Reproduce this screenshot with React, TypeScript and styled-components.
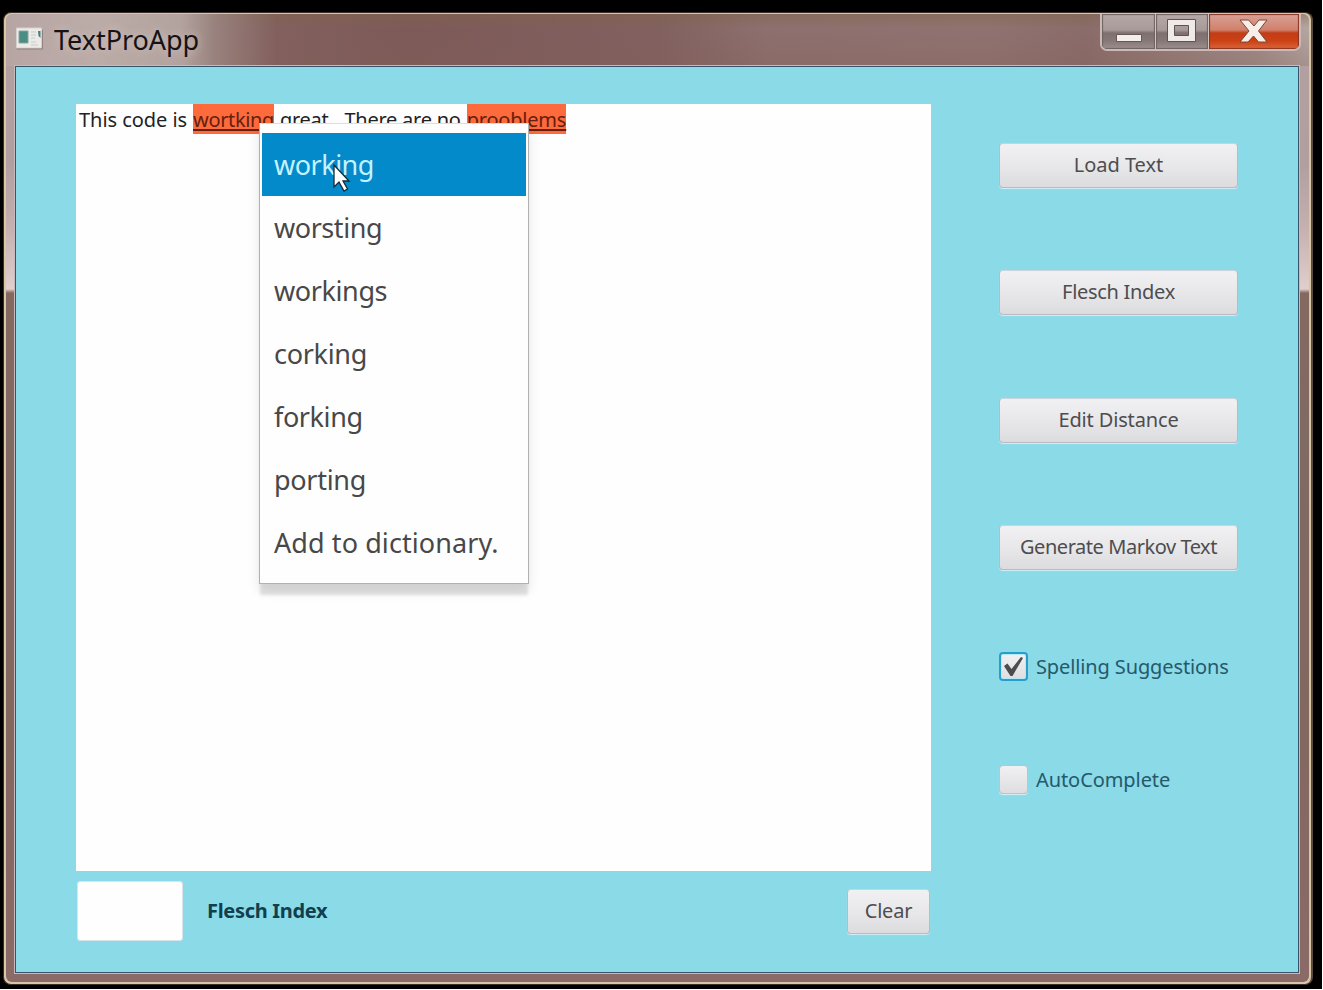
import React from "react";
import styled, { createGlobalStyle } from "styled-components";

const GlobalStyle = createGlobalStyle`
  * { box-sizing: border-box; }
  html { background: #fff; }
  body { margin: 0; overflow: hidden; font-family: "Noto Sans", "Open Sans", sans-serif; }
`;

const Desktop = styled.div`
  width: 1322px;
  height: 989px;
  padding: 12px 9px 4px 3px;
  background: #000;
`;

const Frame = styled.div`
  height: 973px;
  border: 1px solid #3b3029;
  border-right: 2px solid #5a4c42;
  border-radius: 8px;
  background: #d8c6a6;
  padding: 1px 2px 2px 2px;
`;

const Glass = styled.div`
  height: 100%;
  border-radius: 6px;
  display: flex;
  flex-direction: column;
  padding: 0 9px 8px 8px;
  background:
    linear-gradient(90deg, #b7a5a3 0, #bcaca8 90px, #b3a39f 175px, rgba(158,137,132,.8) 210px, rgba(130,98,96,0) 270px) 0 0 / 100% 52px no-repeat,
    linear-gradient(180deg, rgba(128,100,70,.45), rgba(130,96,98,0) 14px, rgba(130,94,84,.3) 52px) 0 0 / 100% 52px no-repeat,
    linear-gradient(90deg, #82605f 270px, #7d5a59 400px, #816060 650px, #8d706f 760px, #907371 980px, #8a6c6b 1080px, #a28e8b 1250px, #b6a7a4 1304px) 0 0 / 100% 52px no-repeat,
    linear-gradient(180deg, #b3a0a0 0, #b19f9f 150px, #c4aeae 210px, #e0cfcc 275px, #84695f 279px, #806a64 420px, #82685f 700px, #8b6a68 100%);
`;

const TitleBar = styled.header`
  height: 51px;
  flex: none;
  display: flex;
  align-items: flex-start;
  padding-left: 2px;
`;

const AppIcon = styled.svg`
  margin-top: 13px;
  flex: none;
`;

const Title = styled.h1`
  margin: 6px 0 0 11px;
  font-size: 27px;
  line-height: 40px;
  font-weight: 400;
  letter-spacing: -0.05px;
  color: #171314;
  flex: 1;
  text-shadow: 0 0 10px rgba(225, 212, 208, .7);
`;

const Controls = styled.div`
  display: flex;
  width: 201px;
  height: 37px;
  margin-right: -1px;
  border: 2px solid #cbb9b3;
  border-top: 0;
  border-radius: 0 0 7px 7px;
  overflow: hidden;
`;

const Control = styled.div<{ $width: number; $close?: boolean }>`
  width: ${p => p.$width}px;
  flex: none;
  display: flex;
  justify-content: center;
  border-right: ${p => (p.$close ? "0" : "1px solid #d3c4c1")};
  box-shadow: inset 0 0 1px 1px ${p => (p.$close ? "#8b3424" : "#6f6161")};
  background: ${p =>
    p.$close
      ? "linear-gradient(#d9a296 0, #d0806c 16px, #c23c16 19px, #cc4215 27px, #dd6a40 36px)"
      : "linear-gradient(#b5a8a6 0, #a79b99 16px, #7d706f 19px, #857876 27px, #a09290 36px)"};
`;

const Client = styled.main`
  flex: 1;
  min-height: 0;
  border: 1px solid #cab8bd;
  display: flex;
`;

const Surface = styled.div`
  flex: 1;
  border: 1px solid #36546a;
  background: #8adae8;
  padding: 37px 59px 28px 60px;
  display: flex;
  justify-content: space-between;
`;

const Left = styled.section`
  width: 855px;
`;

const Editor = styled.div`
  position: relative;
  height: 767px;
  background: #fefefe;
  padding-left: 3px;
  font-size: 20px;
  line-height: 31px;
  color: #222;
  white-space: pre;
`;

const Word = styled.span<{ $gap?: number; $spacing?: number }>`
  display: inline-block;
  height: 30px;
  margin-left: ${p => p.$gap ?? 0}px;
  letter-spacing: ${p => p.$spacing ?? 0}px;
`;

const Misspelled = styled(Word)`
  background: #fd6a3c;
  color: #64200f;
  text-decoration: underline;
  text-decoration-thickness: 2px;
  text-underline-offset: 2px;
`;

const Menu = styled.ul`
  position: absolute;
  left: 183px;
  top: 19px;
  width: 270px;
  height: 461px;
  margin: 0;
  padding: 9px 2px;
  list-style: none;
  background: #fefefe;
  border: 1px solid #b1b1b1;
  border-top-color: #ddd;
  box-shadow: 0 12px 3px -1px rgba(0, 0, 0, .11), 0 7px 12px rgba(0, 0, 0, .09);
`;

const MenuItem = styled.li<{ $active?: boolean; $spacing?: number }>`
  height: 63px;
  padding-left: 12px;
  font-size: 27px;
  line-height: 63px;
  letter-spacing: ${p => p.$spacing ?? -0.35}px;
  color: ${p => (p.$active ? "#c6f2ff" : "#484848")};
  background: ${p => (p.$active ? "#028acb" : "transparent")};
`;

const Pointer = styled.svg`
  position: absolute;
  left: 73px;
  top: 39px;
`;

const Footer = styled.footer`
  display: flex;
  align-items: flex-start;
  padding: 10px 1px 0;
`;

const ScoreField = styled.div`
  width: 106px;
  height: 60px;
  background: #fefefe;
  border: 1px solid #d9e4ea;
  border-radius: 3px;
`;

const ScoreLabel = styled.span`
  margin-left: 24px;
  flex: 1;
  line-height: 59px;
  font-size: 20px;
  font-weight: 700;
  letter-spacing: -0.3px;
  color: #123f4e;
`;

const Button = styled.button<{ $width: number; $spacing?: number }>`
  width: ${p => p.$width}px;
  height: 45px;
  flex: none;
  padding: 0 0 2px;
  border: 1px solid #bdb9c4;
  border-top-color: #c9d3dc;
  border-radius: 4px;
  background: linear-gradient(#f1f0f2, #e8e7e9 50%, #dcdbde);
  box-shadow: 0 1px 1px rgba(232, 243, 247, .8);
  font: 400 20px "Noto Sans", sans-serif;
  letter-spacing: ${p => p.$spacing ?? -0.2}px;
  color: #4d4d50;
`;

const ClearButton = styled(Button)`
  margin-top: 8px;
`;

const Side = styled.aside`
  width: 240px;
  padding-top: 39px;
  display: flex;
  flex-direction: column;
`;

const Actions = styled.div`
  display: grid;
  grid-auto-rows: 45px;
  row-gap: 82.4px;
`;

const Options = styled.div`
  display: grid;
  row-gap: 82.500px;
  margin-top: 81.500px;
`;

const Option = styled.label<{ $spacing: number }>`
  display: flex;
  align-items: center;
  height: 30px;
  gap: 8px;
  font-size: 20px;
  letter-spacing: ${p => p.$spacing}px;
  color: #25596b;
  white-space: nowrap;
`;

const Box = styled.span<{ $focused?: boolean }>`
  width: 29px;
  height: 29px;
  flex: none;
  border-radius: 4px;
  border: ${p => (p.$focused ? "2px solid #279fcc" : "1px solid #b7c5ce")};
  background: linear-gradient(#f1f0f3, #dedee1);
  box-shadow: ${p => (p.$focused ? "inset 0 0 0 1px #b9e7f4" : "0 1px 1px #dceef4")};
`;

const CheckMark = styled.svg`
  display: block;
`;

const suggestions = [
  { text: "working", spacing: -0.5 },
  { text: "worsting", spacing: -0.45 },
  { text: "workings", spacing: -0.4 },
  { text: "corking", spacing: -0.3 },
  { text: "forking", spacing: -0.4 },
  { text: "porting", spacing: -0.3 },
  { text: "Add to dictionary.", spacing: 0.08 },
];

export default function App() {
  return (
    <>
      <GlobalStyle />
      <Desktop>
        <Frame>
          <Glass>
            <TitleBar>
              <AppIcon width="27" height="23" viewBox="0 0 27 23">
                <path d="M.5 1h25v20H.5z" fill="#ecebe8" stroke="#d6d1ce" />
                <path d="M3 4h9v12H3z" fill="#4b8d83" stroke="#86a5a0" />
                <path d="M15 5h5M15 8h5M15 11h4M15 15h5M15 18h7" stroke="#c4cbc8" />
                <path d="M22 4h2.500v7l-2-2z" fill="#497f78" />
                <path d="M.5 22h26V3" fill="none" stroke="#8e8280" />
              </AppIcon>
              <Title>TextProApp</Title>
              <Controls>
                <Control $width={54}>
                  <svg width="30" height="34" viewBox="0 0 30 34">
                    <path d="M2.500 20.500h25v7h-25z" fill="#f4eeeb" stroke="#655855" />
                  </svg>
                </Control>
                <Control $width={53}>
                  <svg width="32" height="32" viewBox="0 0 32 32">
                    <path fillRule="evenodd" d="M1.500 5.500h28v22h-28zM8.500 11.500v10h14v-10z" fill="#efe9e8" stroke="#5e5352" />
                  </svg>
                </Control>
                <Control $width={90} $close>
                  <svg width="30" height="34" viewBox="0 0 30 34">
                    <path d="M1 6h8.500l5.500 6 5-6h8l-8.500 11 8.500 11h-8.500l-5-6-5.500 6H1l9-11z" fill="#f6eee7" stroke="#79463b" />
                  </svg>
                </Control>
              </Controls>
            </TitleBar>
            <Client>
              <Surface>
                <Left>
                  <Editor>
                    <Word $spacing={-0.05}>This code is</Word>
                    <Misspelled $gap={6} $spacing={-0.35}>wortking</Misspelled>
                    <Word $gap={6} $spacing={-0.3}>great.</Word>
                    <Word $gap={11} $spacing={-0.25}>There are no</Word>
                    <Misspelled $gap={6} $spacing={-0.2}>prooblems</Misspelled>
                    <Menu>
                      {suggestions.map((s, i) => (
                        <MenuItem key={s.text} $active={i === 0} $spacing={s.spacing}>{s.text}</MenuItem>
                      ))}
                      <Pointer width="20" height="32" viewBox="0 0 20 32">
                        <path d="M1 2v22l5-5 5 9 3.500-2-4.500-8h6z" fill="#fff" stroke="#172a35" strokeWidth="1.300" />
                      </Pointer>
                    </Menu>
                  </Editor>
                  <Footer>
                    <ScoreField />
                    <ScoreLabel>Flesch Index</ScoreLabel>
                    <ClearButton $width={83}>Clear</ClearButton>
                  </Footer>
                </Left>
                <Side>
                  <Actions>
                    <Button $width={239} $spacing={-0.05}>Load Text</Button>
                    <Button $width={239} $spacing={-0.3}>Flesch Index</Button>
                    <Button $width={239} $spacing={-0.15}>Edit Distance</Button>
                    <Button $width={239} $spacing={-0.45}>Generate Markov Text</Button>
                  </Actions>
                  <Options>
                    <Option $spacing={-0.12}>
                      <Box $focused>
                        <CheckMark width="25" height="25" viewBox="0 0 25 25">
                          <path d="M3 12l3.500-2.500L10.500 15 20 3l2 1-10.500 18H9.500z" fill="#4d4b4f" />
                        </CheckMark>
                      </Box>
                      Spelling Suggestions
                    </Option>
                    <Option $spacing={-0.08}>
                      <Box />
                      AutoComplete
                    </Option>
                  </Options>
                </Side>
              </Surface>
            </Client>
          </Glass>
        </Frame>
      </Desktop>
    </>
  );
}
